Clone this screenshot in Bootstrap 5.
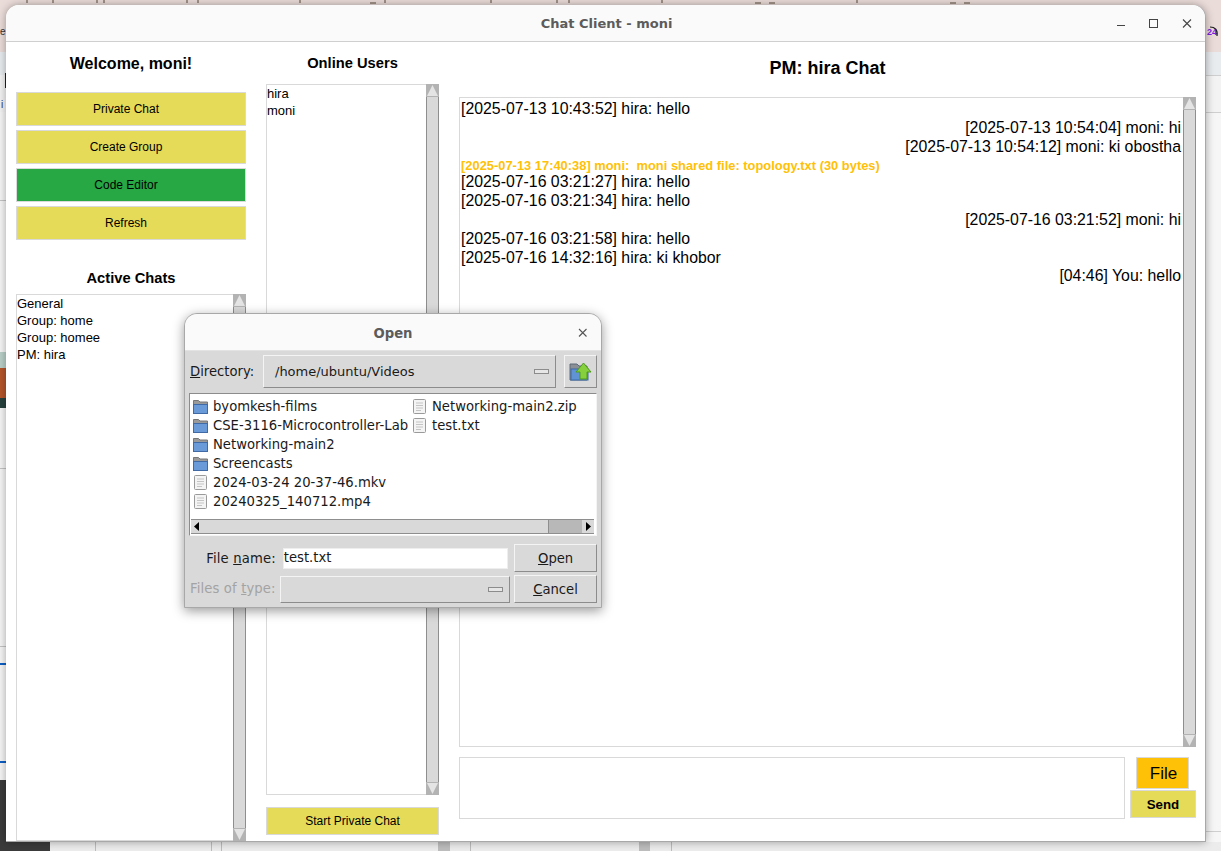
<!DOCTYPE html>
<html lang="en">
<head>
  <meta charset="UTF-8">
  <title>Chat Client - moni</title>
  <link href="https://cdn.jsdelivr.net/npm/bootstrap@5.3.3/dist/css/bootstrap.min.css" rel="stylesheet">
  <script src="https://cdn.jsdelivr.net/npm/bootstrap@5.3.3/dist/js/bootstrap.bundle.min.js" defer></script>
  <style>
    html, body { height: 100%; overflow: hidden; }
    body {
      position: relative;
      font-family: "Liberation Sans", Arial, sans-serif;
      color: #000;
      background:
        linear-gradient(#eadcd9 0 52px, #e9ecef 52px 75px, #f3f3f3 75px 112px, #f6f6f6 112px);
    }
    /* bits of the desktop showing round the window */
    .desk-bit { position: absolute; }
    .desk-photo { left: 0; top: 352px; width: 6px; height: 56px; background: linear-gradient(#b9d0c8 0 16px, #b5552a 16px 46px, #27413c 46px); }
    .desk-dark { left: 0; top: 780px; width: 50px; height: 71px; background: #3b3b3b; }
    .desk-blue { left: 0; width: 6px; height: 2px; background: #0d5fc4; }
    .desk-line { left: 0; width: 6px; height: 1px; background: #c4c4c4; }
    .desk-rline { left: 1206px; width: 15px; height: 1px; background: #cfcfcf; }
    .desk-vbar { top: 842px; height: 9px; background: #bdbdbd; }
    .desk-vline { top: 842px; width: 1px; height: 9px; background: #bcbcbc; }
    .desk-floor { left: 50px; top: 842px; width: 1171px; height: 9px; background: #ececec; }
    .desk-glyph { font-size: 10px; line-height: 1; color: #333; }
    .desk-count { left: 1207px; top: 28px; font-size: 9px; font-weight: 700; color: #7a1fe6; line-height: 1; }

    .app-win {
      position: absolute; left: 6px; top: 5px; width: 1200px; height: 837px;
      background: #fff; border-radius: 13px 13px 0 0;
      border-right: 1px solid #a8a8a8; border-bottom: 1px solid #a8a8a8;
      box-shadow: 0 0 9px rgba(0,0,0,.35);
    }
    .win-title {
      height: 37px; background: #fafafa; border-bottom: 1px solid #cfcfcf; border-radius: 13px 13px 0 0;
      font: 700 13px "DejaVu Sans", sans-serif; color: #5c5c5c; position: relative; padding-left: 2px;
    }
    .win-ctrls { position: absolute; right: 8px; top: 11px; gap: 18px; }
    .app-body { height: 799px; padding: 0 9px 0 10px; }
    .side-col { width: 230px; flex: none; }
    .users-col { width: 173px; margin-left: 20px; flex: none; }
    .chat-col { width: 737px; margin-left: 20px; flex: none; }
    .head-welcome { font-size: 16px; font-weight: 700; line-height: 18px; margin: 13px 0 19px; height: 18px; }
    .head-sect { font-size: 14.7px; font-weight: 700; line-height: 18px; }
    .head-online { margin: 12px 0 12px; height: 18px; }
    .head-active { margin: 29px 0 7px; }
    .head-pm { font-size: 18px; font-weight: 700; line-height: 22px; margin: 15px 0 18px; }
    .tk-btn {
      display: block; width: 100%; height: 34px; padding: 0; border-radius: 0;
      border: 1px solid #d9d9d9; font-size: 12px; line-height: 32px; color: #000;
      background: #e6db59;
    }
    .tk-side { padding-right: 10px; }
    .tk-green { background: #28a745; }
    .tk-box { border: 1px solid #d9d9d9; background: #fff; min-height: 0; }
    .box-text { font-size: 13px; line-height: 17px; padding-left: 0; }
    .scroll-y { width: 13px; flex: none; background: #d9d9d9; border-left: 1px solid #8e8e8e; border-right: 1px solid #8e8e8e; margin-top: -1px; margin-bottom: -1px; margin-right: -1px; }
    .scroll-cap { display: block; width: 13px; height: 13px; margin-left: -1px; }
    .chat-log { font-size: 15.85px; line-height: 18.8px; padding: 2px 2px 2px 1px; }
    .note-line { font-size: 12.9px; font-weight: 700; color: #ffc107; line-height: 17px; margin-top: 1px; margin-bottom: -1px; }
    .bottom-row { margin-top: 10px; }
    .msg-input { width: 666px; height: 62px; }
    .file-btn { width: 53px; height: 32px; background: #ffc107; border: 1px solid #d9d9d9; font-size: 17px; line-height: 31px; padding-left: 2px; margin: 0 0 1px 11px; }
    .send-btn { width: 66px; height: 28px; font-size: 13.3px; font-weight: 700; line-height: 27px; margin-left: 5px; }
    .start-btn { height: 28px; line-height: 26px; margin: 12px 0 6px; }

    .open-dlg {
      position: absolute; left: 184px; top: 313px; width: 418px; height: 295px;
      background: #d9d9d9; border-radius: 13px 13px 0 0; border: 1px solid #a8a8a8;
      box-shadow: 0 3px 12px rgba(0,0,0,.4);
      font: 13.2px/19px "DejaVu Sans", sans-serif; color: #1a1a1a;
    }
    .dlg-title { height: 37px; background: #fafafa; border-radius: 12px 12px 0 0; font-weight: 700; color: #5c5c5c; position: relative; border-bottom: 1px solid #e3e3e3; padding-top: 2px; }
    .dlg-close { position: absolute; right: 12px; top: 13px; }
    .dlg-body { padding: 4px 4px 0 5px; }
    .bevel { border: 1px solid; border-color: #f4f4f4 #8c8c8c #8c8c8c #f4f4f4; background: #d9d9d9; }
    .dir-row { height: 33px; }
    .dir-label { width: 73px; }
    .dir-combo { width: 293px; height: 33px; padding-left: 11px; padding-right: 6px; font-size: 13px; }
    .combo-dash { width: 15px; height: 5px; border: 1px solid #8c8c8c; background: #e6e6e6; flex: none; }
    .up-btn { width: 33px; height: 33px; margin-left: 8px; }
    .file-list { margin: 5px 0 0 -1px; width: 408px; height: 143px; background: #fff; border: 1px solid; border-color: #8c8c8c #f4f4f4 #f4f4f4 #8c8c8c; padding: 3px 2px 1px 1px; }
    .file-cols { height: 122px; }
    .file-col1 { width: 219px; }
    .file-row { height: 19px; gap: 5px; padding-left: 2px; white-space: nowrap; }
    .ico-box { width: 15px; flex: none; display: block; }
    .scroll-x { height: 15px; background: #d9d9d9; border-top: 1px solid #8e8e8e; border-bottom: 1px solid #8e8e8e; }
    .cap-x { width: 12px; height: 13px; flex: none; background: #d9d9d9; }
    .thumb-x { flex: 1; border-right: 1px solid #8e8e8e; background: #d9d9d9; }
    .rest-x { width: 33px; background: #b8b8b8; }
    .name-row { margin-top: 8px; height: 28px; }
    .name-label { width: 86px; text-align: right; margin-right: 7px; letter-spacing: .15px; }
    .name-input { width: 226px; height: 21px; background: #fff; padding-left: 0; line-height: 18px; border: 1px solid #eee; }
    .dlg-btn { width: 83px; height: 28px; margin-left: 6px; }
    .type-row { margin-top: 3px; height: 28px; }
    .type-label { width: 90px; color: #a3a3a3; margin-top: -2px; letter-spacing: .12px; }
    .type-combo { width: 230px; height: 27px; padding-right: 6px; }
    .type-row .dlg-btn { margin-left: 4px; }
  </style>
</head>
<body>
  <!-- desktop behind the windows -->
  <svg class="desk-bit" style="left:0;top:0" width="1000" height="4" viewBox="0 0 1000 4"><path d="M27 0v3M53 0v3M97 0v3M104 0v3M187 0v3M198 0v3M300 0v3M370 3h6M385 0v3M491 0v3M557 0v3M569 0v3M662 0v3M755 3h6M769 3h6M857 0v3M950 3h6M964 3h6" stroke="#5b4a3a" stroke-width="1"/></svg>
  <div class="desk-bit desk-glyph" style="left:0;top:27px">e</div>
  <div class="desk-bit desk-glyph" style="left:1px;top:100px">i</div>
  <div class="desk-bit" style="left:5px;top:73px;width:1px;height:15px;background:#222"></div>
  <div class="desk-bit desk-photo"></div>
  <div class="desk-bit desk-dark"></div>
  <div class="desk-bit desk-blue" style="top:663px"></div>
  <div class="desk-bit desk-blue" style="top:761px"></div>
  <div class="desk-bit desk-line" style="top:200px"></div>
  <div class="desk-bit desk-line" style="top:468px"></div>
  <div class="desk-bit desk-line" style="top:646px"></div>
  <div class="desk-bit desk-rline" style="top:75px"></div>
  <div class="desk-bit desk-rline" style="top:112px"></div>
  <div class="desk-bit desk-rline" style="top:831px"></div>
  <div class="desk-bit desk-floor"></div>
  <div class="desk-bit desk-vline" style="left:95px"></div>
  <div class="desk-bit desk-vline" style="left:221px"></div>
  <div class="desk-bit desk-vbar" style="left:211px;width:1px"></div>
  <div class="desk-bit desk-vbar" style="left:438px;width:12px"></div>
  <div class="desk-bit desk-vline" style="left:470px"></div>
  <div class="desk-bit desk-vbar" style="left:639px;width:11px"></div>
  <div class="desk-bit desk-vline" style="left:671px"></div>
  <div class="desk-bit desk-count">24</div>
  <svg class="desk-bit" style="left:1209px;top:25px" width="12" height="14" viewBox="0 0 12 14"><path d="M1 2 C6 2 9 5 8 11" fill="none" stroke="#222" stroke-width="1.2"/></svg>

  <!-- main chat window -->
  <div class="app-win">
    <div class="win-title d-flex align-items-center justify-content-center">
      Chat Client - moni
      <div class="win-ctrls d-flex align-items-center">
        <svg width="16" height="16" viewBox="0 0 16 16"><path d="M4 9.5h8" stroke="#444" stroke-width="1"/></svg>
        <svg width="16" height="16" viewBox="0 0 16 16"><rect x="2.5" y="3.5" width="8" height="8" fill="none" stroke="#444"/></svg>
        <svg width="16" height="16" viewBox="0 0 16 16"><path d="M2 3.5l8 8M10 3.5l-8 8" stroke="#444" stroke-width="1.1"/></svg>
      </div>
    </div>
    <div class="app-body d-flex">
      <div class="side-col d-flex flex-column">
        <div class="head-welcome text-center">Welcome, moni!</div>
        <div class="d-flex flex-column gap-1">
          <button class="btn tk-btn tk-side">Private Chat</button>
          <button class="btn tk-btn tk-side">Create Group</button>
          <button class="btn tk-btn tk-side tk-green">Code Editor</button>
          <button class="btn tk-btn tk-side">Refresh</button>
        </div>
        <div class="head-sect head-active text-center">Active Chats</div>
        <div class="tk-box d-flex flex-grow-1">
          <div class="box-text flex-grow-1">General<br>Group: home<br>Group: homee<br>PM: hira</div>
          <div class="scroll-y d-flex flex-column justify-content-between">
            <svg class="scroll-cap" viewBox="0 0 13 13"><rect width="13" height="13" fill="#b3b3b3"/><path d="M6.5 1L12 12H1z" fill="#e4e4e4"/></svg>
            <svg class="scroll-cap" viewBox="0 0 13 13"><rect width="13" height="13" fill="#b3b3b3"/><path d="M6.5 12L12 1H1z" fill="#e4e4e4"/></svg>
          </div>
        </div>
      </div>

      <div class="users-col d-flex flex-column">
        <div class="head-sect head-online text-center">Online Users</div>
        <div class="tk-box d-flex flex-grow-1">
          <div class="box-text flex-grow-1">hira<br>moni</div>
          <div class="scroll-y d-flex flex-column justify-content-between">
            <svg class="scroll-cap" viewBox="0 0 13 13"><rect width="13" height="13" fill="#b3b3b3"/><path d="M6.5 1L12 12H1z" fill="#e4e4e4"/></svg>
            <svg class="scroll-cap" viewBox="0 0 13 13"><rect width="13" height="13" fill="#b3b3b3"/><path d="M6.5 12L12 1H1z" fill="#e4e4e4"/></svg>
          </div>
        </div>
        <button class="btn tk-btn start-btn">Start Private Chat</button>
      </div>

      <div class="chat-col d-flex flex-column">
        <div class="head-pm text-center">PM: hira Chat</div>
        <div class="tk-box d-flex flex-grow-1">
          <div class="chat-log flex-grow-1">
            <div>[2025-07-13 10:43:52] hira: hello</div>
            <div class="text-end">[2025-07-13 10:54:04] moni: hi</div>
            <div class="text-end">[2025-07-13 10:54:12] moni: ki obostha</div>
            <div class="note-line">[2025-07-13 17:40:38] moni:&nbsp; moni shared file: topology.txt (30 bytes)</div>
            <div>[2025-07-16 03:21:27] hira: hello</div>
            <div>[2025-07-16 03:21:34] hira: hello</div>
            <div class="text-end">[2025-07-16 03:21:52] moni: hi</div>
            <div>[2025-07-16 03:21:58] hira: hello</div>
            <div>[2025-07-16 14:32:16] hira: ki khobor</div>
            <div class="text-end">[04:46] You: hello</div>
          </div>
          <div class="scroll-y d-flex flex-column justify-content-between">
            <svg class="scroll-cap" viewBox="0 0 13 13"><rect width="13" height="13" fill="#b3b3b3"/><path d="M6.5 1L12 12H1z" fill="#e4e4e4"/></svg>
            <svg class="scroll-cap" viewBox="0 0 13 13"><rect width="13" height="13" fill="#b3b3b3"/><path d="M6.5 12L12 1H1z" fill="#e4e4e4"/></svg>
          </div>
        </div>
        <div class="bottom-row d-flex">
          <div class="tk-box msg-input"></div>
          <div class="d-flex flex-column">
            <button class="btn tk-btn file-btn">File</button>
            <button class="btn tk-btn send-btn">Send</button>
          </div>
        </div>
        <div style="height:22px"></div>
      </div>
    </div>
  </div>

  <!-- file picker on top -->
  <div class="open-dlg">
    <div class="dlg-title d-flex align-items-center justify-content-center">
      Open
      <svg class="dlg-close" width="12" height="12" viewBox="0 0 12 12"><path d="M2 2l7.5 7.5M9.5 2L2 9.5" stroke="#555" stroke-width="1.1"/></svg>
    </div>
    <div class="dlg-body">
      <div class="dir-row d-flex align-items-center">
        <div class="dir-label"><u>D</u>irectory:</div>
        <div class="bevel dir-combo d-flex align-items-center justify-content-between">
          <span>/home/ubuntu/Videos</span><span class="combo-dash"></span>
        </div>
        <div class="bevel up-btn d-flex align-items-center justify-content-center">
          <svg width="24" height="22" viewBox="0 0 24 22">
            <path d="M1 3h7l2 2h8v14H1z" fill="#8a8f95" stroke="#5d6a78"/>
            <rect x="2" y="8" width="17" height="11" fill="#5f93d6" stroke="#3d6aa8"/>
            <path d="M14.5 2l7.5 9h-4v7h-7v-7H7z" fill="#86d03e" stroke="#4e9a1c"/>
          </svg>
        </div>
      </div>
      <div class="file-list">
        <div class="file-cols d-flex">
          <div class="file-col1">
            <div class="file-row d-flex align-items-center"><svg class="ico-box" height="15" viewBox="0 0 15 15"><path d="M.5 1.5h5l1.5 1.5h7.5v11H.5z" fill="#9a9a9a" stroke="#777"/><rect x=".5" y="5.5" width="14" height="9" fill="#6a9ad8" stroke="#3f6aa6"/></svg>byomkesh-films</div>
            <div class="file-row d-flex align-items-center"><svg class="ico-box" height="15" viewBox="0 0 15 15"><path d="M.5 1.5h5l1.5 1.5h7.5v11H.5z" fill="#9a9a9a" stroke="#777"/><rect x=".5" y="5.5" width="14" height="9" fill="#6a9ad8" stroke="#3f6aa6"/></svg>CSE-3116-Microcontroller-Lab</div>
            <div class="file-row d-flex align-items-center"><svg class="ico-box" height="15" viewBox="0 0 15 15"><path d="M.5 1.5h5l1.5 1.5h7.5v11H.5z" fill="#9a9a9a" stroke="#777"/><rect x=".5" y="5.5" width="14" height="9" fill="#6a9ad8" stroke="#3f6aa6"/></svg>Networking-main2</div>
            <div class="file-row d-flex align-items-center"><svg class="ico-box" height="15" viewBox="0 0 15 15"><path d="M.5 1.5h5l1.5 1.5h7.5v11H.5z" fill="#9a9a9a" stroke="#777"/><rect x=".5" y="5.5" width="14" height="9" fill="#6a9ad8" stroke="#3f6aa6"/></svg>Screencasts</div>
            <div class="file-row d-flex align-items-center"><svg class="ico-box" height="15" viewBox="0 0 15 15"><rect x="1.5" y=".5" width="12" height="14" rx="1" fill="#f4f4f4" stroke="#9a9a9a"/><path d="M4 4h7M4 6.5h7M4 9h7M4 11.5h5" stroke="#c4c4c4"/></svg>2024-03-24 20-37-46.mkv</div>
            <div class="file-row d-flex align-items-center"><svg class="ico-box" height="15" viewBox="0 0 15 15"><rect x="1.5" y=".5" width="12" height="14" rx="1" fill="#f4f4f4" stroke="#9a9a9a"/><path d="M4 4h7M4 6.5h7M4 9h7M4 11.5h5" stroke="#c4c4c4"/></svg>20240325_140712.mp4</div>
          </div>
          <div>
            <div class="file-row d-flex align-items-center"><svg class="ico-box" height="15" viewBox="0 0 15 15"><rect x="1.5" y=".5" width="12" height="14" rx="1" fill="#f4f4f4" stroke="#9a9a9a"/><path d="M4 4h7M4 6.5h7M4 9h7M4 11.5h5" stroke="#c4c4c4"/></svg>Networking-main2.zip</div>
            <div class="file-row d-flex align-items-center"><svg class="ico-box" height="15" viewBox="0 0 15 15"><rect x="1.5" y=".5" width="12" height="14" rx="1" fill="#f4f4f4" stroke="#9a9a9a"/><path d="M4 4h7M4 6.5h7M4 9h7M4 11.5h5" stroke="#c4c4c4"/></svg>test.txt</div>
          </div>
        </div>
        <div class="scroll-x d-flex">
          <svg class="cap-x" viewBox="0 0 12 13"><path d="M3 6.5L8 2v9z" fill="#000"/></svg>
          <div class="thumb-x"></div>
          <div class="rest-x"></div>
          <svg class="cap-x" viewBox="0 0 12 13"><path d="M9 6.5L4 2v9z" fill="#000"/></svg>
        </div>
      </div>
      <div class="name-row d-flex align-items-center">
        <div class="name-label">File <u>n</u>ame:</div>
        <div class="name-input">test.txt</div>
        <div class="bevel dlg-btn d-flex align-items-center justify-content-center"><span><u>O</u>pen</span></div>
      </div>
      <div class="type-row d-flex align-items-center">
        <div class="type-label">Files of <u>t</u>ype:</div>
        <div class="bevel type-combo d-flex align-items-center justify-content-end"><span class="combo-dash"></span></div>
        <div class="bevel dlg-btn d-flex align-items-center justify-content-center"><span><u>C</u>ancel</span></div>
      </div>
    </div>
  </div>
</body>
</html>
